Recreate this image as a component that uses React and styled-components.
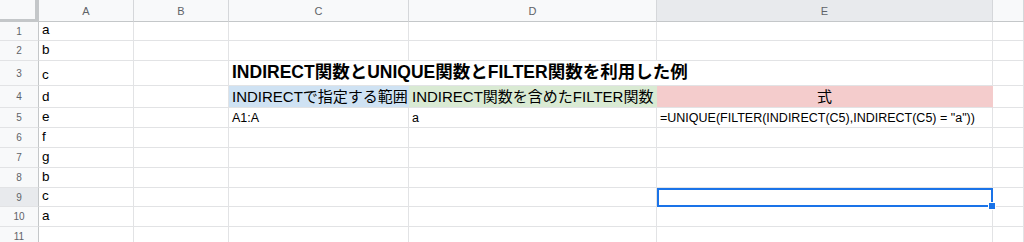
import React from "react";
import styled, { createGlobalStyle } from "styled-components";

const GlobalStyle = createGlobalStyle`
  html, body {
    margin: 0;
    padding: 0;
    background: #fff;
    overflow: hidden;
  }
  body {
    font-family: "Liberation Sans", "Noto Sans CJK JP", sans-serif;
    color: #000;
  }
`;

const Sheet = styled.div`
  display: grid;
  grid-template-columns: 39px 95px 95px 180px 248px 336px 1fr;
  grid-template-rows: 22px 19px 20px 25px 22px 20px 20px 20px 20px 19px 20px 20px;
  width: 1024px;
  height: 242px;
  overflow: hidden;
`;

const Corner = styled.div`
  box-sizing: border-box;
  background: #f8f9fa;
  border-right: 4px solid #c4c7c9;
  border-bottom: 3px solid #c4c7c9;
`;

const ColHeader = styled.div`
  box-sizing: border-box;
  display: flex;
  align-items: center;
  justify-content: center;
  background: ${(p) => (p.$active ? "#e8eaed" : "#f8f9fa")};
  border-right: 1px solid #d5d7da;
  border-bottom: 1px solid #c4c7c9;
  font-size: 11px;
  color: #5f6368;
`;

const RowHeader = styled.div`
  box-sizing: border-box;
  display: flex;
  align-items: center;
  justify-content: center;
  background: ${(p) => (p.$active ? "#e8eaed" : "#f8f9fa")};
  border-right: 1px solid #c4c7c9;
  border-bottom: 1px solid #e2e3e5;
  font-size: 10px;
  color: #5f6368;
`;

const Cell = styled.div`
  box-sizing: border-box;
  position: relative;
  z-index: ${(p) => (p.$raised ? 2 : "auto")};
  display: flex;
  align-items: flex-end;
  justify-content: ${(p) => (p.$center ? "center" : "flex-start")};
  padding: 0 3px ${(p) => p.$pb ?? 2}px;
  background: ${(p) => p.$bg || "#fff"};
  border-right: 1px solid ${(p) => p.$bg || "#e2e3e5"};
  border-bottom: 1px solid #e2e3e5;
  grid-column: ${(p) => (p.$span ? `span ${p.$span}` : "auto")};
  font-size: ${(p) => p.$size || 13.5}px;
  font-weight: ${(p) => (p.$bold ? 700 : 400)};
  white-space: nowrap;
  line-height: 1.15;
`;

const Selection = styled.div`
  position: absolute;
  left: 0;
  top: 0;
  right: -1px;
  bottom: -1px;
  border: 2px solid #1a73e8;
  pointer-events: none;
`;

const Handle = styled.div`
  position: absolute;
  right: -4px;
  bottom: -4px;
  width: 6px;
  height: 6px;
  background: #1a73e8;
  border: 1px solid #fff;
`;

const columns = ["A", "B", "C", "D", "E", ""];
const colA = ["a", "b", "c", "d", "e", "f", "g", "b", "c", "a", ""];

function renderRow(i) {
  const n = i + 1;
  const first = <Cell key={`a${n}`}>{colA[i]}</Cell>;
  const blank = (k) => <Cell key={`${k}${n}`} />;

  if (n === 3) {
    return [
      first,
      blank("b"),
      <Cell key="c3" $span={3} $size={17.5} $bold $pb={3}>
        INDIRECT関数とUNIQUE関数とFILTER関数を利用した例
      </Cell>,
      blank("f"),
    ];
  }
  if (n === 4) {
    return [
      first,
      blank("b"),
      <Cell key="c4" $bg="#cfe2f3" $size={15}>INDIRECTで指定する範囲</Cell>,
      <Cell key="d4" $bg="#d9ead3" $size={15}>INDIRECT関数を含めたFILTER関数</Cell>,
      <Cell key="e4" $bg="#f4cccc" $size={15} $center>式</Cell>,
      blank("f"),
    ];
  }
  if (n === 5) {
    return [
      first,
      blank("b"),
      <Cell key="c5" $size={12.5}>A1:A</Cell>,
      <Cell key="d5" $size={12.5}>a</Cell>,
      <Cell key="e5" $size={12.5}>=UNIQUE(FILTER(INDIRECT(C5),INDIRECT(C5) = "a"))</Cell>,
      blank("f"),
    ];
  }
  return [
    first,
    blank("b"),
    blank("c"),
    blank("d"),
    n === 9 ? (
      <Cell key="e9" $raised>
        <Selection />
        <Handle />
      </Cell>
    ) : (
      blank("e")
    ),
    blank("f"),
  ];
}

export default function App() {
  return (
    <>
      <GlobalStyle />
      <Sheet>
        <Corner />
        {columns.map((c) => (
          <ColHeader key={c || "f"} $active={c === "E"}>
            {c}
          </ColHeader>
        ))}
        {colA.map((_, i) => (
          <React.Fragment key={i}>
            <RowHeader $active={i === 8}>{i + 1}</RowHeader>
            {renderRow(i)}
          </React.Fragment>
        ))}
      </Sheet>
    </>
  );
}
